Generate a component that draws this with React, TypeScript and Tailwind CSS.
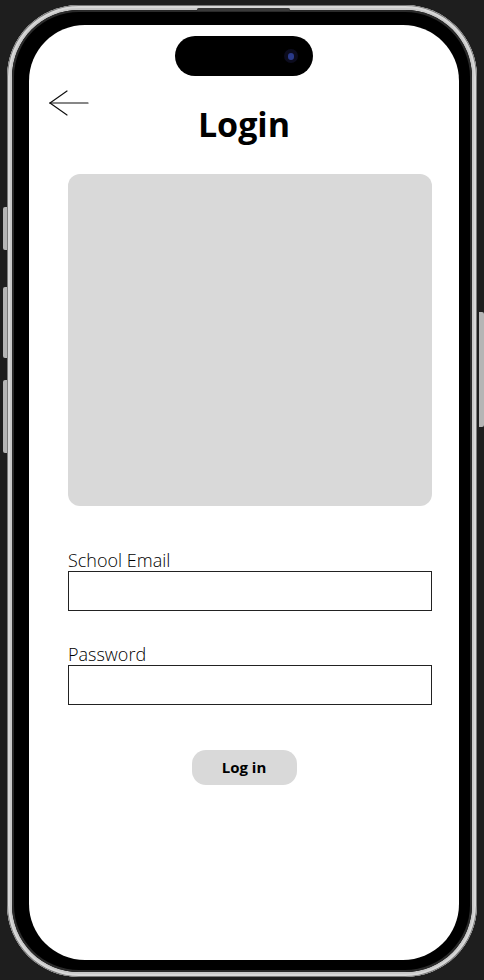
import React from "react";

function BackArrow() {
  return (
    <svg width="40" height="28" viewBox="0 0 40 28" fill="none" stroke="#111" strokeWidth="1.2" strokeLinecap="round">
      <line x1="1" y1="13" x2="39" y2="13" />
      <line x1="1" y1="13" x2="18" y2="1" />
      <line x1="1" y1="13" x2="18" y2="25" />
    </svg>
  );
}

export default function App() {
  const sans = { fontFamily: '"Open Sans", "Liberation Sans", sans-serif' };
  return (
    <div className="relative w-[484px] h-[980px] overflow-hidden bg-[#1e1e1e]" style={sans}>
      {/* side buttons */}
      <div className="absolute left-[3px] top-[207px] w-[5px] h-[43px] rounded-l-[2px] bg-[#b5b5b5]" />
      <div className="absolute left-[3px] top-[287px] w-[5px] h-[71px] rounded-l-[2px] bg-[#b5b5b5]" />
      <div className="absolute left-[3px] top-[380px] w-[5px] h-[73px] rounded-l-[2px] bg-[#b5b5b5]" />
      <div className="absolute right-0 top-[312px] w-[5px] h-[115px] rounded-r-[2px] bg-[#b5b5b5]" />

      <div className="ml-[7px] mt-[5px] w-[470px] h-[972px] relative rounded-[72px] bg-[#c9c9c9] p-[5px] shadow-[inset_0_0_0_1px_#7a7a7a,inset_0_0_0_3px_#d8d8d8]">
        <div className="absolute left-[190px] top-[3px] w-[93px] h-[3px] rounded-full bg-[#3a3a3a]" />
        <div className="w-full h-full rounded-[67px] bg-black pl-[17px] pr-[13px] pt-[15px] pb-[12px] shadow-[inset_0_0_0_2px_#2a2a2a]">
          <div className="relative w-[430px] h-[935px] rounded-[56px] bg-white overflow-hidden">
            {/* dynamic island */}
            <div className="absolute left-[146px] top-[11px] w-[138px] h-[40px] rounded-full bg-black flex items-center justify-end pr-[15px]">
              <div className="w-[14px] h-[14px] rounded-full bg-[#0c0c1e] flex items-center justify-center">
                <div className="w-[6px] h-[7px] rounded-full bg-[#2a3a8a]" />
              </div>
            </div>

            <div className="pt-[65px] grid grid-cols-[1fr_auto_1fr]">
              <div className="pl-[20px]">
                <BackArrow />
              </div>
              <h1 className="mt-[14px] text-[34px] leading-[40px] font-bold text-black">Login</h1>
              <div />
            </div>

            <div className="ml-[39px] w-[364px] flex flex-col">
              <div className="mt-[30px] h-[332px] rounded-[12px] bg-[#d9d9d9]" />

              <label className="mt-[43px] text-[18px] leading-[22px] font-light text-black">School Email</label>
              <div className="h-[40px] border border-[#222] bg-white" />

              <label className="mt-[32px] text-[18px] leading-[22px] font-light text-black">Password</label>
              <div className="h-[40px] border border-[#222] bg-white" />
            </div>

            <div className="mt-[45px] flex justify-center">
              <button className="w-[105px] h-[35px] rounded-[14px] bg-[#d9d9d9] text-[15px] font-bold text-black">
                Log in
              </button>
            </div>
          </div>
        </div>
      </div>
    </div>
  );
}
